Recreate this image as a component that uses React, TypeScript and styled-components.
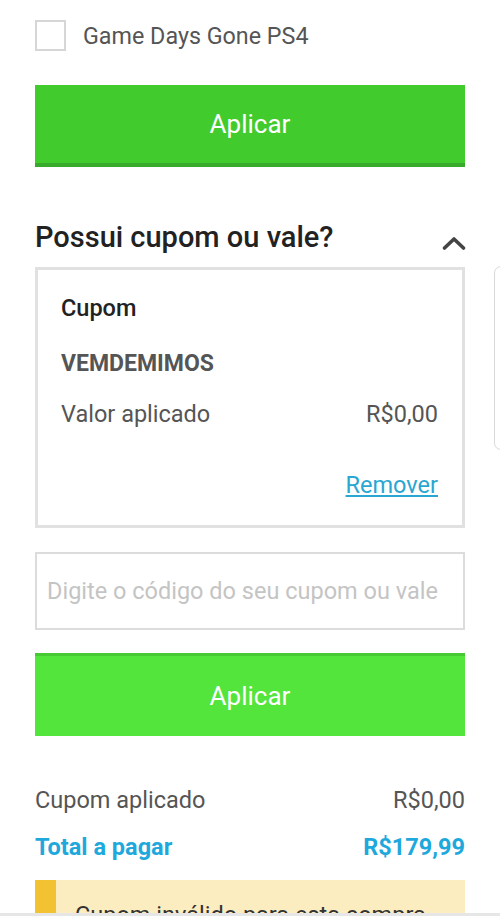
import React from "react";
import styled, { createGlobalStyle } from "styled-components";

const Global = createGlobalStyle`
  html, body {
    margin: 0;
    padding: 0;
    background: #ffffff;
    height: 916px;
    overflow: hidden;
  }
  body {
    font-family: Roboto, "Noto Sans", Arial, sans-serif;
    -webkit-font-smoothing: antialiased;
  }
`;

const Page = styled.div`
  position: relative;
  box-sizing: border-box;
  width: 500px;
  height: 916px;
  padding: 20px 35px 0 35px;
  display: flex;
  flex-direction: column;
  overflow: hidden;
  & > * {
    flex-shrink: 0;
  }
`;

const CheckRow = styled.label`
  display: flex;
  align-items: center;
  gap: 17px;
  height: 31px;
`;

const CheckBox = styled.span`
  box-sizing: border-box;
  width: 31px;
  height: 31px;
  border: 2px solid #d6d6d6;
  background: #fff;
  flex: none;
`;

const CheckLabel = styled.span`
  font-size: 23.3px;
  line-height: 28px;
  color: #555555;
`;

const GreenButton = styled.button<{ $variant: "dark" | "light" }>`
  box-sizing: border-box;
  width: 100%;
  height: ${(p) => (p.$variant === "dark" ? "82px" : "83px")};
  margin-top: ${(p) => (p.$variant === "dark" ? "34px" : "23px")};
  border: none;
  border-radius: 0;
  background: ${(p) => (p.$variant === "dark" ? "#42cb2d" : "#53e53b")};
  border-bottom: ${(p) => (p.$variant === "dark" ? "4px solid #37a92b" : "none")};
  border-top: ${(p) => (p.$variant === "light" ? "3px solid #46c934" : "none")};
  color: #ffffff;
  font-family: Roboto, "Noto Sans", Arial, sans-serif;
  font-size: 26px;
  font-weight: 400;
  display: flex;
  align-items: center;
  justify-content: center;
  padding: 0;
`;

const HeaderRow = styled.div`
  display: flex;
  justify-content: space-between;
  align-items: flex-end;
  margin-top: 54px;
  height: 32px;
`;

const Heading = styled.h2`
  margin: 0;
  font-size: 29px;
  line-height: 32px;
  font-weight: 500;
  color: #222222;
`;

const Chevron = styled.svg`
  width: 24px;
  height: 14px;
  margin-bottom: 3px;
  margin-right: -1px;
`;

const Card = styled.div`
  box-sizing: border-box;
  margin-top: 14px;
  border: 3px solid #e1e1e1;
  padding: 24px 24px 26px 23px;
  display: flex;
  flex-direction: column;
`;

const CardTitle = styled.div`
  font-size: 23.5px;
  line-height: 28px;
  font-weight: 500;
  color: #222222;
`;

const CouponCode = styled.div`
  margin-top: 28px;
  font-size: 23px;
  line-height: 28px;
  font-weight: 700;
  color: #555555;
`;

const ValueRow = styled.div<{ $top: number; $tone?: "muted" | "accent" }>`
  display: flex;
  justify-content: space-between;
  margin-top: ${(p) => p.$top}px;
  font-size: 23.5px;
  line-height: 28px;
  font-weight: ${(p) => (p.$tone === "accent" ? 700 : 400)};
  color: ${(p) => (p.$tone === "accent" ? "#1ea8dc" : "#555555")};
`;

const LinkRow = styled.div`
  display: flex;
  justify-content: flex-end;
  margin-top: 43px;
  font-size: 23.5px;
  line-height: 28px;
`;

const RemoveLink = styled.a`
  color: #2aa6d2;
  text-decoration: underline;
  text-underline-offset: 2px;
  cursor: pointer;
`;

const CodeInput = styled.input`
  box-sizing: border-box;
  width: 100%;
  height: 78px;
  margin-top: 24px;
  border: 2px solid #dcdcdc;
  border-radius: 0;
  padding: 0 10px;
  font-family: Roboto, "Noto Sans", Arial, sans-serif;
  font-size: 23.5px;
  color: #333;
  outline: none;
  &::placeholder {
    color: #c4c4c4;
  }
`;

const Alert = styled.div`
  box-sizing: border-box;
  margin-top: 19px;
  background: #fcedc1;
  border-left: 21px solid #f2c232;
  padding: 21px 19px 20px 19px;
  font-size: 23.5px;
  line-height: 28px;
  color: #333333;
`;

const ScrollHint = styled.div`
  position: absolute;
  left: 494px;
  top: 266px;
  width: 20px;
  height: 184px;
  box-sizing: border-box;
  border: 1px solid #d9d9d9;
  border-radius: 7px;
`;

const BottomEdge = styled.div`
  position: fixed;
  left: 0;
  right: 0;
  bottom: 0;
  height: 3px;
  background: #e6e6e6;
`;

export default function App() {
  return (
    <>
      <Global />
      <Page>
        <CheckRow>
          <CheckBox />
          <CheckLabel>Game Days Gone PS4</CheckLabel>
        </CheckRow>

        <GreenButton $variant="dark">Aplicar</GreenButton>

        <HeaderRow>
          <Heading>Possui cupom ou vale?</Heading>
          <Chevron viewBox="0 0 24 14">
            <polyline
              points="2.5,12 12,3 21.5,12"
              fill="none"
              stroke="#444444"
              strokeWidth="3.6"
              strokeLinecap="round"
              strokeLinejoin="round"
            />
          </Chevron>
        </HeaderRow>

        <Card>
          <CardTitle>Cupom</CardTitle>
          <CouponCode>VEMDEMIMOS</CouponCode>
          <ValueRow $top={22}>
            <span>Valor aplicado</span>
            <span>R$0,00</span>
          </ValueRow>
          <LinkRow>
            <RemoveLink>Remover</RemoveLink>
          </LinkRow>
        </Card>

        <CodeInput placeholder="Digite o código do seu cupom ou vale" />

        <GreenButton $variant="light">Aplicar</GreenButton>

        <ValueRow $top={50}>
          <span>Cupom aplicado</span>
          <span>R$0,00</span>
        </ValueRow>
        <ValueRow $top={19} $tone="accent">
          <span>Total a pagar</span>
          <span>R$179,99</span>
        </ValueRow>

        <Alert>Cupom inválido para esta compra</Alert>

        <ScrollHint />
      </Page>
      <BottomEdge />
    </>
  );
}
